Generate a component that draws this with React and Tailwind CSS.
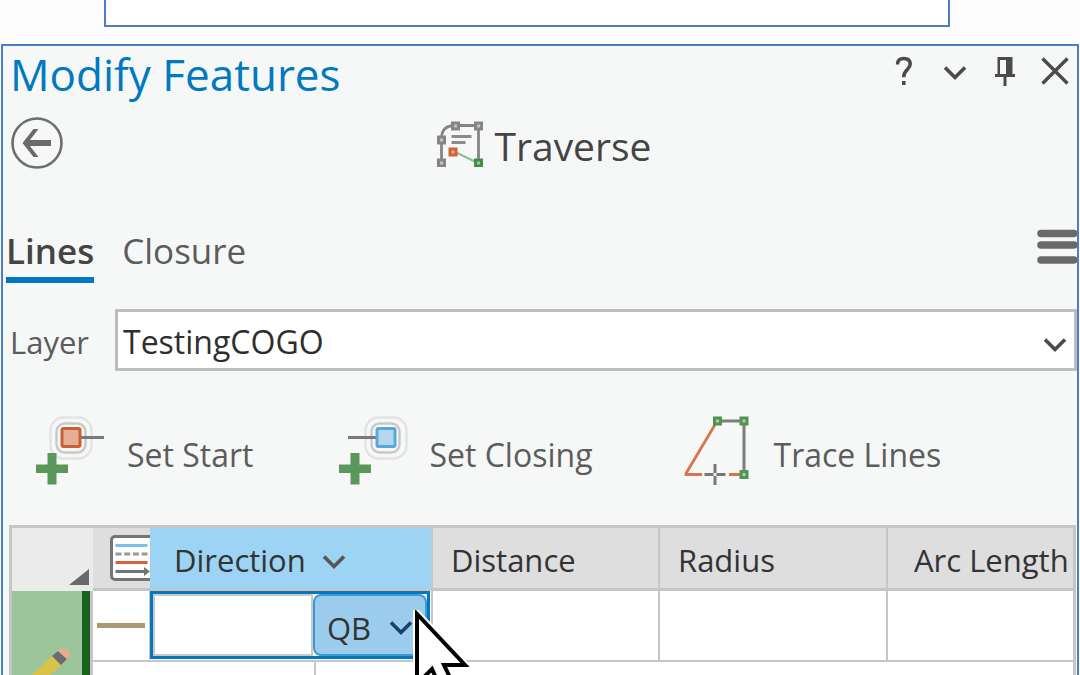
import { useState } from "react";

const ChevronIcon = ({ className }) => (
  <svg
    viewBox="0 0 24 16"
    fill="none"
    stroke="currentColor"
    strokeWidth="3.600"
    className={`w-6 h-4 shrink-0 ${className}`}
  >
    <path d="M2 2.5 12 12.5 22 2.5" />
  </svg>
);

const HelpIcon = () => (
  <svg viewBox="0 0 18 30" fill="none" stroke="currentColor" strokeWidth="3.600" className="w-[18px] h-[30px]">
    <path d="M2.5 8.5C2.5 4 5 2.500 8.6 2.500c4 0 6.600 2 6.600 5.600 0 5.200-6.400 6.200-6.400 12.200v1" />
    <path d="M7 25h3.600v4H7z" fill="currentColor" stroke="none" />
  </svg>
);

const PinIcon = () => (
  <svg viewBox="0 0 20 30" className="w-5 h-[30px]">
    <path d="M2.500 1h15v17h2.500v3h-8.500v9h-3v-9H0v-3h2.500z" fill="currentColor" />
    <path d="M5 4h6v14H5z" fill="#f6f8f8" />
  </svg>
);

const CloseIcon = () => (
  <svg viewBox="0 0 28 28" fill="none" stroke="currentColor" strokeWidth="3.400" className="w-7 h-7">
    <path d="M1.500 1.500l25 25M26.500 1.500l-25 25" />
  </svg>
);

const BackIcon = () => (
  <svg viewBox="0 0 52 52" className="w-13 h-13">
    <circle cx="26" cy="26" r="24.500" fill="none" stroke="#6e6e6e" strokeWidth="2.600" />
    <path d="M11.500 26 22.500 12h5L19 23h21v6H19l8.500 11h-5z" fill="#6a6a6a" />
  </svg>
);

const TraverseIcon = () => (
  <svg viewBox="0 0 46 46" fill="none" className="w-[46px] h-[46px]">
    <path d="M4.500 41V18C4.500 9 9 4.500 18 4.500h23.500V41" stroke="#858585" strokeWidth="2.800" />
    <path d="M14.500 15.500h20M14.500 21.500h14" stroke="#8c8c8c" strokeWidth="2.800" />
    <path d="M17 30.500 41 42" stroke="#8fc08f" strokeWidth="2.400" />
    <g stroke="#858585" strokeWidth="3" fill="#c4c4c4">
      <rect x="15.500" y="2" width="6" height="6" />
      <rect x="38.500" y="2" width="6" height="6" />
      <rect x="1.500" y="16" width="6" height="6" />
      <rect x="1.500" y="39" width="6" height="6" />
    </g>
    <rect x="13" y="28" width="6" height="6" stroke="#d0623c" strokeWidth="3" fill="#f0a98e" />
    <rect x="38.500" y="39" width="6" height="6" stroke="#3f8f45" strokeWidth="3" fill="#9bd09b" />
  </svg>
);

const SetStartIcon = () => (
  <svg viewBox="0 0 70 70" fill="none" className="w-[70px] h-[70px]">
    <rect x="14.500" y="1.500" width="41" height="41" rx="13" stroke="#e3e3e3" strokeWidth="2.400" />
    <rect x="20.500" y="7.500" width="29" height="29" rx="8" stroke="#c9c9c9" strokeWidth="2.400" />
    <path d="M45 21.500h23" stroke="#7a7a7a" strokeWidth="3" />
    <rect x="26" y="12.500" width="18" height="18" rx="1.500" fill="#e6ae92" stroke="#cb5f38" strokeWidth="3" />
    <path d="M11.500 37h9v11.500H32v8.500H20.500v11.500h-9V57H0v-8.500h11.500z" fill="#5a975b" />
  </svg>
);

const SetClosingIcon = () => (
  <svg viewBox="0 0 70 70" fill="none" className="w-[70px] h-[70px]">
    <rect x="26.500" y="1.500" width="41" height="41" rx="13" stroke="#e3e3e3" strokeWidth="2.400" />
    <rect x="32.500" y="7.500" width="28" height="29" rx="8" stroke="#c9c9c9" strokeWidth="2.400" />
    <path d="M9 21.500h29" stroke="#7a7a7a" strokeWidth="3" />
    <rect x="38" y="12.500" width="18" height="18" rx="1.500" fill="#b8d6ea" stroke="#55a9dc" strokeWidth="3" />
    <path d="M11.500 37h9v11.500H32v8.500H20.500v11.500h-9V57H0v-8.500h11.500z" fill="#5a975b" />
  </svg>
);

const TraceLinesIcon = () => (
  <svg viewBox="0 0 66 70" fill="none" className="w-[66px] h-[70px]">
    <path d="M33.500 5h26.500v53" stroke="#7d7d7d" strokeWidth="3" />
    <path d="M32 7 2 57.500v1h16M45 58.500h14" stroke="#d97450" strokeWidth="2.800" />
    <path d="M20.500 58.500h21M31 48v21" stroke="#777" strokeWidth="3" />
    <path d="M29.500 57h3v3h-3z" fill="#eee" />
    <g stroke="#4f9453" strokeWidth="3" fill="#a8d3a8">
      <rect x="30.500" y="2" width="6" height="6" />
      <rect x="57" y="2" width="6" height="6" />
      <rect x="57" y="55.500" width="6" height="6" />
    </g>
  </svg>
);

const LineTypeIcon = () => (
  <svg viewBox="0 0 40 46" fill="none" className="block w-10 h-[46px]">
    <path d="M41 1.500H5a3.500 3.500 0 0 0-3.500 3.500v36A3.500 3.500 0 0 0 5 44.500h36" fill="#fdfdfd" stroke="#747474" strokeWidth="3" />
    <path d="M5.500 10.500h32" stroke="#7dbde8" strokeWidth="3" />
    <path d="M5.500 19h32" stroke="#999" strokeWidth="3" strokeDasharray="6 2.700" />
    <path d="M5.500 27.500h32" stroke="#d2633c" strokeWidth="3" />
    <path d="M5.500 36.500h30" stroke="#747474" strokeWidth="3" />
    <path d="M34 32l6 4.500-6 4.500z" fill="#747474" />
  </svg>
);

const PencilIcon = () => (
  <svg viewBox="0 0 60 60" className="block w-[60px] h-[60px]">
    <path d="M40 9l9 9-32 31-12 4 3-13z" fill="#d9c24a" />
    <path d="M46 4l9 8-6 6-9-9z" fill="#6b6b6b" />
    <path d="M46 4c2-3 6-4 9-2s4 6 1 9l-1 1z" fill="#e3ac93" />
  </svg>
);

const CursorIcon = () => (
  <svg viewBox="0 0 60 90" className="w-[60px] h-[90px]">
    <path
      d="M4 4v70l15-15 11 25 12-6-11-23h21z"
      fill="#fff"
      stroke="#fff"
      strokeWidth="8"
    />
    <path
      d="M4 4v70l15-15 11 25 12-6-11-23h21z"
      fill="#fff"
      stroke="#000"
      strokeWidth="4"
    />
  </svg>
);

const tools = [
  { name: "Set Start", icon: SetStartIcon, style: "gap-[21px]" },
  { name: "Set Closing", icon: SetClosingIcon, style: "gap-5 ml-[86px]" },
  { name: "Trace Lines", icon: TraceLinesIcon, style: "gap-6 ml-[91px]" },
];

const TitleBar = () => (
  <header className="flex items-center justify-between pl-[7px] pr-2 h-14">
    <h1 className="text-[44px] leading-[56px] text-[#0079c1]">Modify Features</h1>
    <div className="flex items-center pb-1.5 text-[#4b4b4b]">
      <button type="button" aria-label="Help" className="mr-[30px]">
        <HelpIcon />
      </button>
      <button type="button" aria-label="Options" className="mr-7 pt-1">
        <ChevronIcon />
      </button>
      <button type="button" aria-label="Auto hide" className="mr-[26px]">
        <PinIcon />
      </button>
      <button type="button" aria-label="Close">
        <CloseIcon />
      </button>
    </div>
  </header>
);

const TraverseTable = () => {
  const [direction, setDirection] = useState("");

  return (
    <table className="w-full table-fixed border-separate border-spacing-0 border-[3px] border-[#c6c6c6] bg-white text-[31px] text-[#333]">
      <colgroup>
        <col className="w-[81px]" />
        <col className="w-[57px]" />
        <col className="w-[166px]" />
        <col className="w-[117px]" />
        <col className="w-[227px]" />
        <col className="w-[228px]" />
        <col />
      </colgroup>
      <thead>
        <tr className="h-[63px] text-left">
          <th aria-label="Select all" className="bg-[#ebebeb] p-0 align-bottom">
            <svg viewBox="0 0 20 16" className="block w-5 h-4 ml-auto mr-1 mb-1.5">
              <path d="M0 16 20 0v16z" fill="#696969" />
            </svg>
          </th>
          <th aria-label="Line type" className="bg-[#dedede] border-b-3 border-[#c6c6c6] p-0 pl-[17px]">
            <LineTypeIcon />
          </th>
          <th colSpan={2} className="bg-[#9dd4f4] border-b-3 border-r-2 border-[#c6c6c6] pt-1 pb-0 px-6 font-normal">
            <span className="flex items-center gap-4">
              Direction
              <ChevronIcon className="mt-1 text-[#555]" />
            </span>
          </th>
          <th className="bg-[#dedede] border-b-3 border-r-2 border-[#c6c6c6] pt-1 pb-0 px-[18px] font-normal">
            Distance
          </th>
          <th className="bg-[#dedede] border-b-3 border-r-2 border-[#c6c6c6] pt-1 pb-0 px-[18px] font-normal">
            Radius
          </th>
          <th className="bg-[#dedede] border-b-3 border-[#c6c6c6] pt-1 pb-0 pl-[26px] pr-0 font-normal whitespace-nowrap">
            Arc Length
          </th>
        </tr>
      </thead>
      <tbody>
        <tr className="h-[71px]">
          <td rowSpan={2} className="bg-[#9cc59b] border-r-3 border-[#c6c6c6] p-0 align-top">
            <div className="border-r-8 border-[#19631f] h-[142px] pt-14">
              <PencilIcon />
            </div>
          </td>
          <td className="border-b-2 border-r border-[#c6c6c6] py-0 px-1">
            <div className="h-[5px] bg-[#aa9c70]" />
          </td>
          <td colSpan={2} className="border-b-2 border-r-2 border-[#c6c6c6] p-0 align-top">
            <div className="relative flex h-[68px] mr-px border-3 border-[#0079c1]">
              <input
                type="text"
                aria-label="Direction"
                value={direction}
                onChange={(e) => setDirection(e.target.value)}
                className="min-w-0 flex-1 bg-white border-2 border-[#c9c9c9] px-2 outline-none"
              />
              <button
                type="button"
                className="flex items-center justify-between w-[114px] pt-1.5 pl-3 pr-3 bg-[#9bcceb] border-2 border-[#3a9ad4] rounded-lg"
              >
                QB
                <ChevronIcon className="text-[#1c3f6e]" />
              </button>
              <div className="absolute left-[260px] top-4 pointer-events-none">
                <CursorIcon />
              </div>
            </div>
          </td>
          <td className="border-b-2 border-r-2 border-[#c6c6c6]" />
          <td className="border-b-2 border-r-2 border-[#c6c6c6]" />
          <td className="border-b-2 border-[#c6c6c6]" />
        </tr>
        <tr className="h-[71px]">
          <td colSpan={2} className="border-r-2 border-[#c6c6c6]" />
          <td colSpan={4} />
        </tr>
      </tbody>
    </table>
  );
};

export default function App() {
  const [layer, setLayer] = useState("TestingCOGO");

  return (
    <div className="h-screen overflow-hidden bg-[#fdfdfd] font-['Open_Sans','Noto_Sans',sans-serif]">
      <div className="h-[27px] ml-[104px] mr-[130px] bg-white border-2 border-t-0 border-[#4a80c2]" />

      <main className="mt-[17px] mx-px bg-[#f6f8f8] border-2 border-[#4a80c2]">
        <TitleBar />

        <div className="relative flex items-center justify-center h-[82px] pl-2 mt-px">
          <button type="button" aria-label="Back" className="absolute left-2 top-3.5">
            <BackIcon />
          </button>
          <h2 className="flex items-center gap-3 text-[39px] text-[#444]">
            <TraverseIcon />
            <span className="pt-1">Traverse</span>
          </h2>
        </div>

        <nav className="flex items-start justify-between mt-10 pl-[3px] text-[35px] leading-[52px]">
          <div className="flex gap-7">
            <button type="button" className="font-semibold text-[#444] border-b-6 border-[#0079c1]">
              Lines
            </button>
            <button type="button" className="text-[#5c5c5c] border-b-6 border-transparent">
              Closure
            </button>
          </div>
          <button type="button" aria-label="Menu" className="mt-1">
            <svg viewBox="0 0 40 36" className="w-10 h-9" stroke="#6a6a6a" strokeWidth="7.500" strokeLinecap="round">
              <path d="M4 4.500h33M4 16h33M4 31h33" />
            </svg>
          </button>
        </nav>

        <div className="flex items-center mt-[26px] pl-[7px]">
          <label htmlFor="layer" className="w-[105px] pt-1 text-[31px] text-[#5c5c5c]">
            Layer
          </label>
          <div className="relative flex-1">
            <select
              id="layer"
              value={layer}
              onChange={(e) => setLayer(e.target.value)}
              className="block w-full h-[62px] appearance-none bg-white border-3 border-[#bcbdc1] pt-1 pl-[5px] text-[32px] text-[#2e2e2e]"
            >
              <option>TestingCOGO</option>
            </select>
            <ChevronIcon className="absolute right-[10px] top-7 pointer-events-none text-[#4b4b4b]" />
          </div>
        </div>

        <div className="flex items-center mt-[45px] pl-[33px] text-[32px] text-[#5c5c5c]">
          {tools.map(({ name, icon: Icon, style }) => (
            <button key={name} type="button" className={`flex items-center whitespace-nowrap ${style}`}>
              <Icon />
              <span className="pt-2">{name}</span>
            </button>
          ))}
        </div>

        <div className="mt-[39px] pl-1.5 pr-px">
          <TraverseTable />
        </div>
      </main>
    </div>
  );
}
